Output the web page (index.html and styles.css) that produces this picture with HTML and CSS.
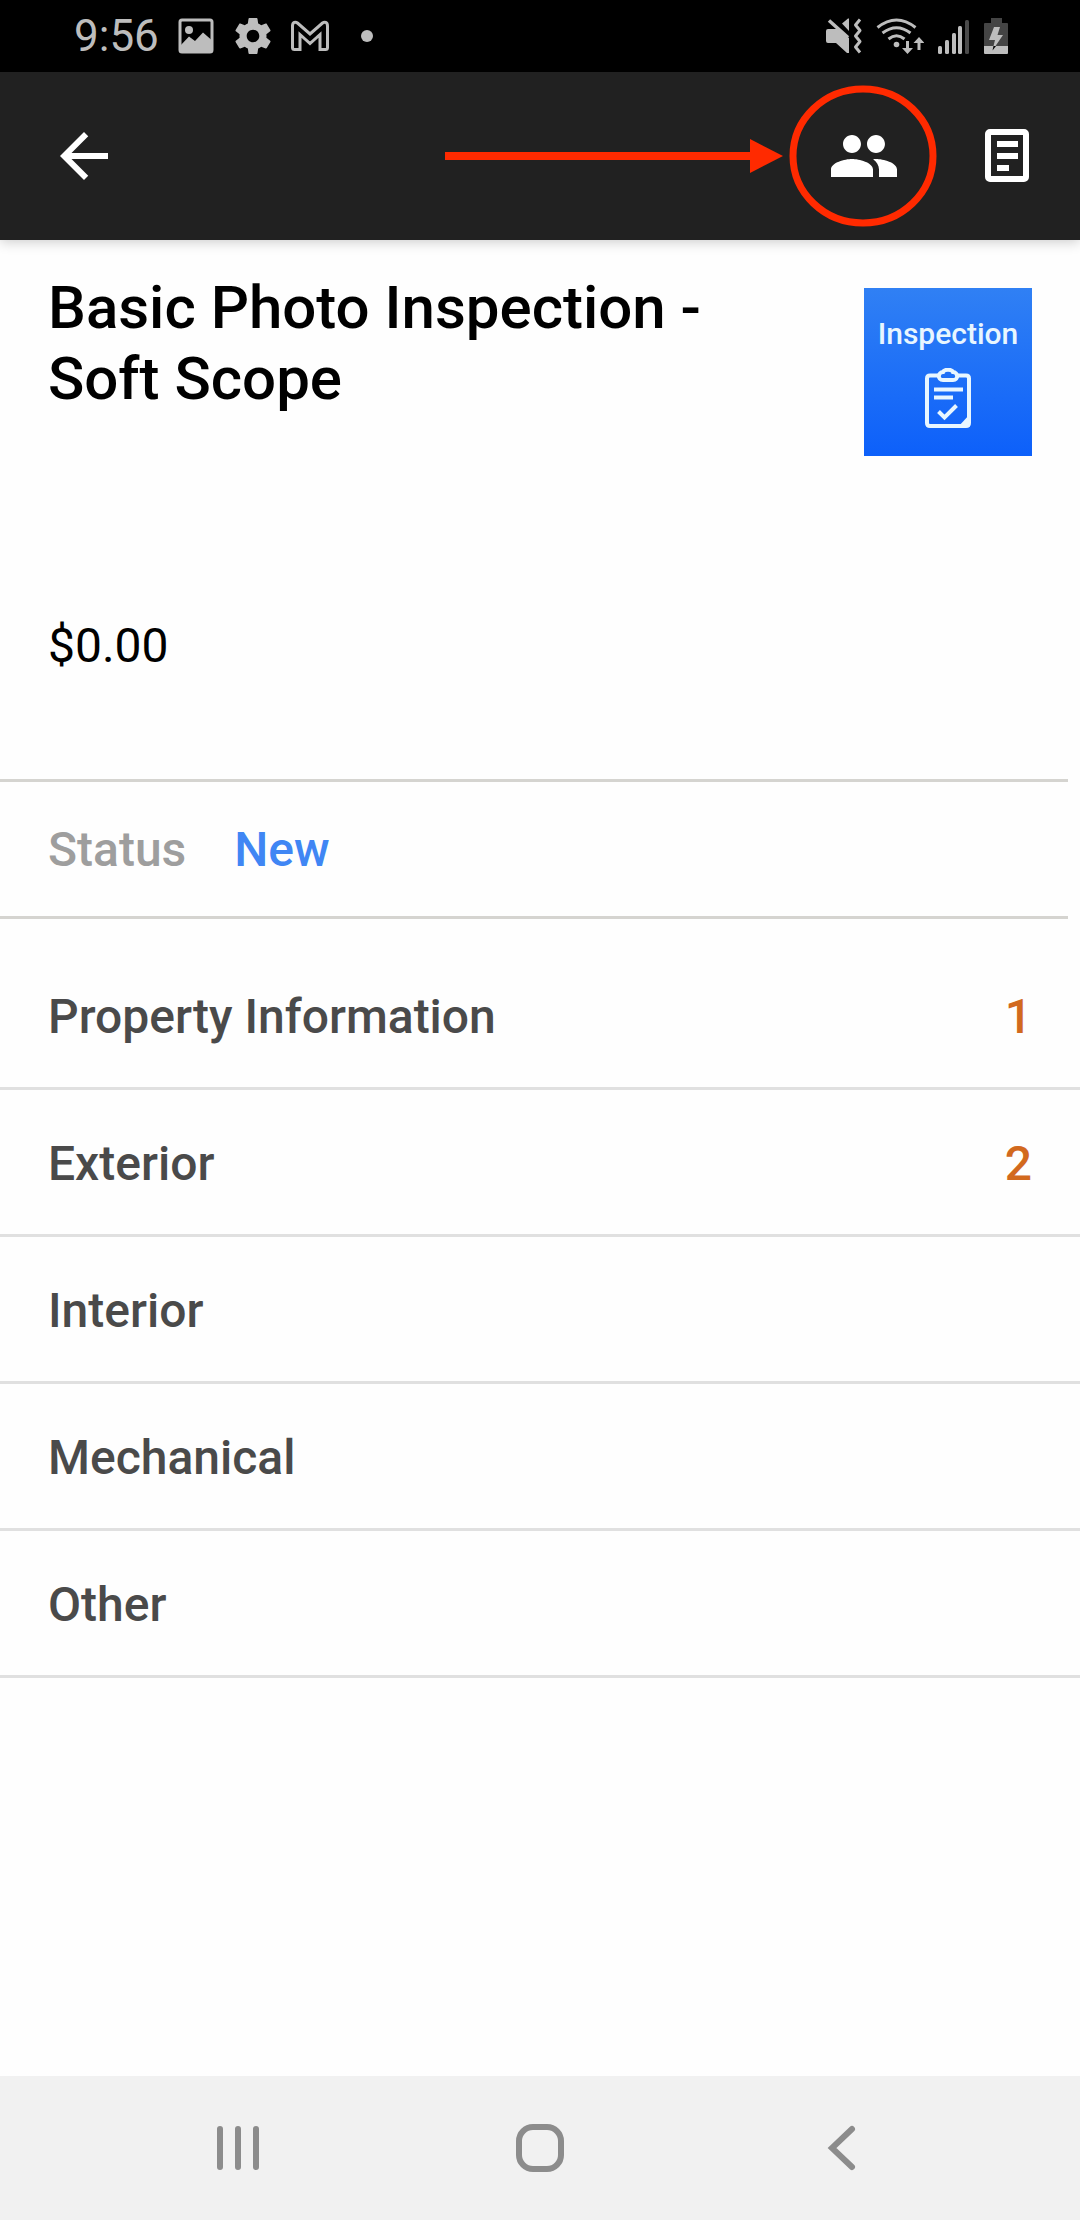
FILE: index.html
```html
<!DOCTYPE html>
<html lang="en">
<head>
    <meta charset="UTF-8">
    <meta name="viewport" content="width=device-width, initial-scale=1.0">
    <title>Basic Photo Inspection - Soft Scope</title>
    <link rel="stylesheet" href="styles.css">
</head>
<body>
  <div class="status-bar">
    <div class="status-left">
      <span class="clock">9:56</span>
      <svg class="notif-icon" viewBox="0 0 40 36">
        <rect x="4" y="2" width="32" height="32" rx="2" fill="none" stroke="currentColor" stroke-width="3"/>
        <circle cx="13" cy="12" r="4" fill="currentColor"/>
        <path d="M4 28l9-9.5 6 4.5 8-8.5 8 7v12H4z" fill="currentColor"/>
      </svg>
      <svg class="notif-icon" viewBox="1 2 22 20">
        <path fill="currentColor" d="M19.43 12.98c.04-.32.07-.64.07-.98s-.03-.66-.07-.98l2.11-1.65c.19-.15.24-.42.12-.64l-2-3.46c-.12-.22-.39-.3-.61-.22l-2.49 1c-.52-.4-1.08-.73-1.69-.98l-.38-2.65C14.46 2.18 14.25 2 14 2h-4c-.25 0-.46.18-.49.42l-.38 2.65c-.61.25-1.17.59-1.69.98l-2.49-1c-.23-.09-.49 0-.61.22l-2 3.46c-.13.22-.07.49.12.64l2.11 1.65c-.04.32-.07.65-.07.98s.03.66.07.98l-2.11 1.65c-.19.15-.24.42-.12.64l2 3.46c.12.22.39.3.61.22l2.49-1c.52.4 1.08.73 1.69.98l.38 2.65c.03.24.24.42.49.42h4c.25 0 .46-.18.49-.42l.38-2.65c.61-.25 1.17-.59 1.69-.98l2.49 1c.23.09.49 0 .61-.22l2-3.46c.12-.22.07-.49-.12-.64l-2.11-1.65zM12 15.5c-1.93 0-3.5-1.57-3.5-3.5s1.57-3.5 3.5-3.5 3.5 1.57 3.5 3.5-1.57 3.5-3.5 3.5z"/>
      </svg>
      <svg class="notif-icon" viewBox="0 0 40 36">
        <path d="M2.500 8c0-4 3-4.500 5-3L20 16 32.500 5c2-1.500 5-1 5 3v21.500q0 2-2 2h-5.500V16.500L20 25.500 10 16.500v15H4.500q-2 0-2-2z" fill="none" stroke="currentColor" stroke-width="3"/>
      </svg>
      <svg class="notif-icon" viewBox="0 0 40 36"><circle cx="20" cy="18" r="6" fill="currentColor"/></svg>
    </div>
    <div class="status-right">
      <!-- muted, vibrate -->
      <svg width="36" height="36" viewBox="0 0 36 36">
        <path d="M0 13q0-2 2-2h10l11 9v15h-2L10 25H2q-2 0-2-2zM16 5.500L22 .5h1V13z" fill="currentColor"/>
        <path d="M3 2.500L22 19.500" stroke="currentColor" stroke-width="3.5"/>
        <path d="M34 1.500L29.500 7l4.500 5.500-4.500 5.500 4.500 5.500-4.500 5.500 4.500 5.500" fill="none" stroke="currentColor" stroke-width="3" stroke-linejoin="round"/>
      </svg>
      <!-- wifi -->
      <svg width="48" height="36" viewBox="0 0 48 36">
        <g fill="none" stroke="currentColor" stroke-width="3">
          <path d="M1.500 9.500Q20.500-5.500 39.500 9.500M6.500 15Q20.500 4.500 34.500 15M12.500 21Q20.500 14.500 28.500 21"/>
          <path d="M31.500 23v9M43 32v-9"/>
        </g>
        <circle cx="20.5" cy="26.5" r="2.8" fill="currentColor"/>
        <path d="M26 30h11l-5.500 6zM37.500 25h11L43 19z" fill="currentColor"/>
      </svg>
      <!-- signal -->
      <svg width="32" height="36" viewBox="0 0 32 36">
        <g fill="currentColor">
          <rect x="0" y="28" width="4" height="8" rx="1.5"/>
          <rect x="7" y="22" width="4" height="14" rx="1.5"/>
          <rect x="14" y="15" width="4" height="21" rx="1.5"/>
          <rect x="20" y="8" width="4" height="28" rx="1.5"/>
        </g>
        <rect x="27" y="2" width="4" height="34" rx="1.5" fill="#4a4a4a"/>
      </svg>
      <!-- battery, charging -->
      <svg width="24" height="36" viewBox="0 0 24 36">
        <path d="M7 0h11v5h5q1 0 1 1v22H0V6q0-1 1-1h6z" fill="#444"/>
        <path d="M0 28h24v7q0 1-1 1H1q-1 0-1-1z" fill="currentColor"/>
        <path d="M10 9h6l-2.500 8H19l-7.500 11H9.500l1.500-6H5z" fill="currentColor"/>
        <path d="M9.500 28h2.500l-3.500 4.500z" fill="#000"/>
      </svg>
    </div>
  </div>

  <header class="app-bar">
    <button class="icon-btn" aria-label="Back">
      <svg viewBox="0 0 24 24"><path d="M20 11H7.830l5.590-5.590L12 4l-8 8 8 8 1.410-1.410L7.830 13H20v-2z"/></svg>
    </button>
    <div class="actions">
      <button class="icon-btn people" aria-label="People">
        <svg viewBox="0 0 24 24"><path d="M16 11c1.660 0 2.990-1.340 2.990-3S17.660 5 16 5s-3 1.340-3 3 1.340 3 3 3zm-8 0c1.660 0 2.990-1.340 2.990-3S9.660 5 8 5 5 6.340 5 8s1.340 3 3 3zm0 2c-2.330 0-7 1.170-7 3.500V19h14v-2.500c0-2.330-4.670-3.500-7-3.500zm8 0c-.29 0-.62.02-.97.05 1.160.84 1.970 1.970 1.970 3.450V19h6v-2.500c0-2.330-4.670-3.500-7-3.500z"/></svg>
        <!-- arrow and ring pointing at the button -->
        <svg class="callout" viewBox="0 0 492 142">
          <path d="M0 67h306v8H0z"/>
          <path d="M305 54l33 17-33 17z"/>
          <ellipse cx="418" cy="71" rx="70" ry="67"/>
        </svg>
      </button>
      <button class="icon-btn" aria-label="Notes">
        <svg viewBox="0 0 72 72">
          <rect x="16" y="12" width="38" height="47" rx="2" fill="none" stroke="#fff" stroke-width="6"/>
          <path d="M25 21h21v6H25zM25 33h21v6H25zM25 45h12v6H25z"/>
        </svg>
      </button>
    </div>
  </header>

  <main>
    <section class="summary">
      <div class="summary-top">
        <h1>Basic Photo Inspection - Soft Scope</h1>
        <div class="tile">
          <span>Inspection</span>
          <svg width="46" height="60" viewBox="0 0 46 60" fill="none" stroke="#e8f6ff" stroke-width="4">
            <path d="M14 7.500H5q-3 0-3 3V55q0 3 3 3h36q3 0 3-3V10.500q0-3-3-3h-9"/>
            <path d="M18 4c1-3 9-3 10 0 5 0 6 8 0 8H18c-6 0-5-8 0-8z"/>
            <path d="M9 21.500h29M9 29.500h19"/>
            <path d="M13.500 43.500l6 6 12-12"/>
            <path d="M33 59l12-13v11q0 2-2 2z" fill="#e8f6ff" stroke="none"/>
          </svg>
        </div>
      </div>
      <p class="price">$0.00</p>
    </section>

    <div class="status-row">
      <span class="label">Status</span>
      <span class="value">New</span>
    </div>

    <ul class="sections">
      <li><a href="#property">Property Information <span class="count">1</span></a></li>
      <li><a href="#exterior">Exterior <span class="count">2</span></a></li>
      <li><a href="#interior">Interior</a></li>
      <li><a href="#mechanical">Mechanical</a></li>
      <li><a href="#other">Other</a></li>
    </ul>
  </main>

  <nav class="nav-bar">
    <button aria-label="Recent apps">
      <svg viewBox="0 0 48 48"><path d="M6 5v38M24 5v38M42 5v38"/></svg>
    </button>
    <button aria-label="Home">
      <svg viewBox="0 0 48 48"><rect x="3" y="3" width="42" height="42" rx="14"/></svg>
    </button>
    <button aria-label="Back">
      <svg viewBox="0 0 48 48"><path d="M34 5L14 24l20 19"/></svg>
    </button>
  </nav>
</body>
</html>
```
FILE: styles.css
```css
* {
    box-sizing: border-box;
}

body {
    margin: 0;
    min-height: 100vh;
    display: flex;
    flex-direction: column;
    background: #fefefe;
    color: #000;
    font-family: Roboto, "Liberation Sans", sans-serif;
    font-size: 48px;
    line-height: 56px;
}

button {
    padding: 0;
    border: none;
    background: none;
    cursor: pointer;
}

svg {
    display: block;
}

/* Status bar */
.status-bar {
    display: flex;
    justify-content: space-between;
    align-items: center;
    height: 72px;
    padding: 0 72px 0 74px;
    background: #000;
    color: #bdbdbd;
}

.status-left {
    display: flex;
    align-items: center;
    gap: 17px;
}

.status-right {
    display: flex;
    align-items: center;
    gap: 14px;
}

.clock {
    font-size: 44px;
}

.notif-icon {
    width: 40px;
    height: 36px;
}

/* App bar */
.app-bar {
    position: relative;
    display: flex;
    justify-content: space-between;
    align-items: center;
    height: 168px;
    padding: 0 36px 0 48px;
    background: #212121;
    box-shadow: 0 2px 12px rgba(0, 0, 0, 0.2);
}

.actions {
    display: flex;
    gap: 72px;
}

.icon-btn {
    width: 72px;
    height: 72px;
}

.icon-btn svg {
    width: 100%;
    fill: #fff;
}

.people {
    position: relative;
}

.people .callout {
    position: absolute;
    top: -35px;
    right: -37px;
    width: 492px;
    height: 142px;
    fill: #ff2a00;
    pointer-events: none;
}

.callout ellipse {
    fill: none;
    stroke: #ff2a00;
    stroke-width: 7;
}

/* Content */
main {
    flex: 1;
}

.summary {
    padding: 32px 48px 105px;
}

.summary-top {
    display: flex;
    justify-content: space-between;
    align-items: flex-start;
    gap: 120px;
    min-height: 298px;
}

h1 {
    margin: 0;
    font-size: 60px;
    font-weight: 500;
    line-height: 71px;
}

.tile {
    flex: none;
    display: flex;
    flex-direction: column;
    align-items: center;
    gap: 18px;
    width: 168px;
    height: 168px;
    margin-top: 16px;
    padding-top: 30px;
    background: linear-gradient(#3080f4, #0d60fa);
    color: #e8f6ff;
    font-size: 30px;
    font-weight: 500;
    line-height: 32px;
}

.price {
    margin: 48px 0 0;
}

.status-row {
    display: flex;
    gap: 48px;
    margin-right: 12px;
    padding: 40px 48px 38px;
    border-top: 3px solid #d5d4d0;
    border-bottom: 3px solid #d5d4d0;
    font-weight: 500;
}

.label {
    color: #9e9e9e;
}

.value {
    color: #4086f4;
}

.sections {
    margin: 24px 0 0;
    padding: 0;
    list-style: none;
}

.sections a {
    display: flex;
    justify-content: space-between;
    padding: 46px 48px 42px;
    border-bottom: 3px solid #e0e0e0;
    color: #4a4a4a;
    font-weight: 500;
    text-decoration: none;
}

.count {
    color: #d2691e;
}

/* Navigation bar */
.nav-bar {
    display: grid;
    grid-template-columns: repeat(3, 1fr);
    height: 144px;
    padding: 0 8%;
    background: #f1f1f1;
}

.nav-bar button {
    display: flex;
    justify-content: center;
    align-items: center;
}

.nav-bar svg {
    width: 48px;
    height: 48px;
    fill: none;
    stroke: #8c8c8c;
    stroke-width: 6;
    stroke-linecap: round;
}
```
